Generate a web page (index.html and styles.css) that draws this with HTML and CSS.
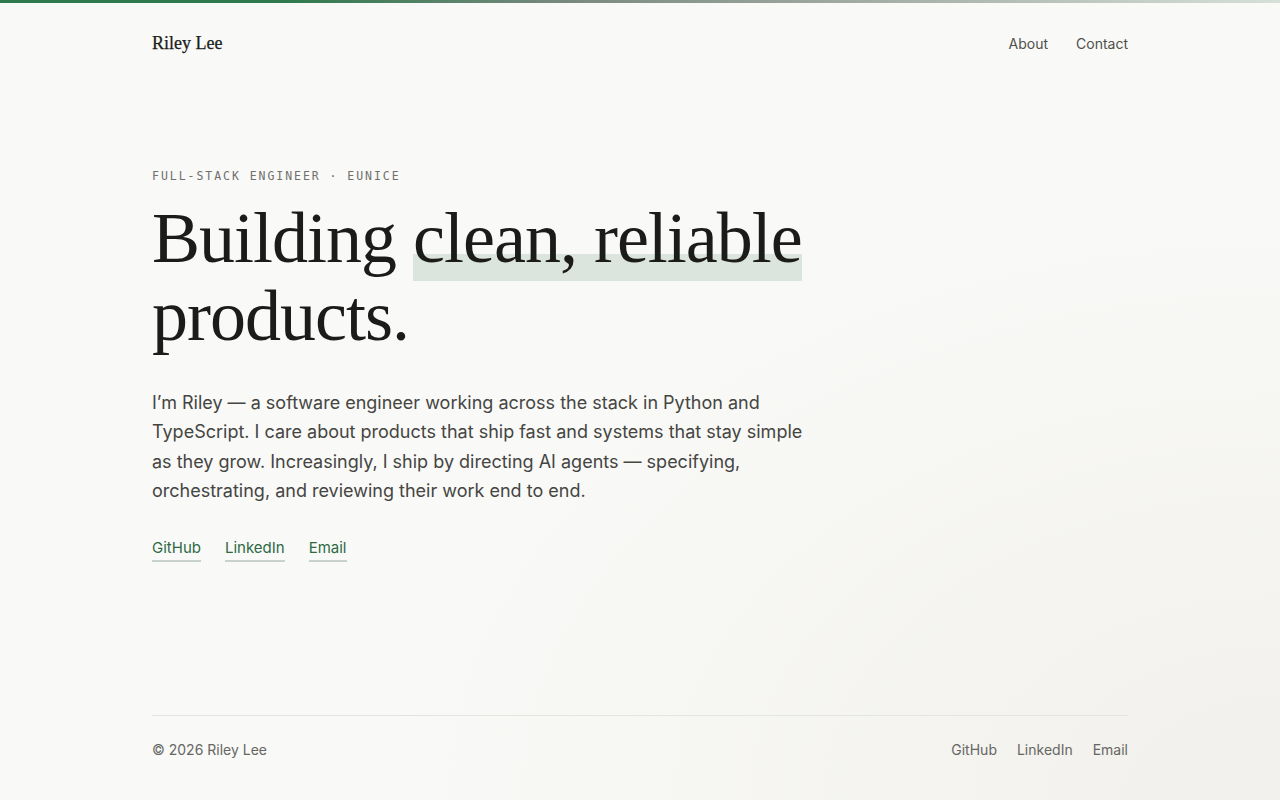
FILE: index.html
```html
<!DOCTYPE html>
<html lang="en">
<head>
<meta charset="utf-8">
<title>Riley Lee</title>
<link rel="stylesheet" href="styles.css">
</head>
<body>
<div class="topbar"></div>
<div class="page">
  <header class="header">
    <a class="brand" href="#">Riley Lee</a>
    <nav class="nav">
      <a href="#">About</a>
      <a href="#">Contact</a>
    </nav>
  </header>
  <main class="hero">
    <p class="eyebrow">Full-stack engineer · Eunice</p>
    <h1 class="title">Building <span class="mark">clean, reliable</span> products.</h1>
    <p class="lead">I’m Riley — a software engineer working across the stack in Python and TypeScript. I care about products that ship fast and systems that stay simple as they grow. Increasingly, I ship by directing AI agents — specifying, orchestrating, and reviewing their work end to end.</p>
    <div class="links">
      <a href="#">GitHub</a>
      <a href="#">LinkedIn</a>
      <a href="#">Email</a>
    </div>
  </main>
  <footer class="footer">
    <span class="copy">© 2026 Riley Lee</span>
    <div class="flinks">
      <a href="#">GitHub</a>
      <a href="#">LinkedIn</a>
      <a href="#">Email</a>
    </div>
  </footer>
</div>
</body>
</html>
```
FILE: styles.css
```css
* { box-sizing: border-box; }
html, body { margin: 0; padding: 0; }
body {
  min-height: 100vh;
  background: radial-gradient(ellipse 900px 600px at 100% 100%, #f1f0ec 0%, #f9f9f7 100%) #f9f9f7;
  font-family: "Inter", "Liberation Sans", sans-serif;
  color: #1c1c1a;
  display: flex;
  flex-direction: column;
}
a { text-decoration: none; color: inherit; }
.topbar {
  height: 3px;
  background: linear-gradient(90deg, #2e7a4c 0%, #2f7a4d 22%, #7b8a80 45%, #a6b0a8 70%, #d6e0d9 100%);
}
.page {
  flex: 1;
  width: 976px;
  margin: 0 auto;
  display: flex;
  flex-direction: column;
}
.header {
  display: flex;
  justify-content: space-between;
  align-items: center;
  height: 80px;
}
.brand {
  font-family: "Liberation Serif", "DejaVu Serif", serif;
  font-size: 18px;
  color: #1c1c1a;
  -webkit-text-stroke: 0.25px #1c1c1a;
}
.nav { display: flex; gap: 28px; font-size: 14px; color: #4f4f4c; }
.hero { padding-top: 86px; }
.eyebrow {
  margin: 0 0 16px;
  font-family: "DejaVu Sans Mono", "Liberation Mono", monospace;
  font-size: 11.5px;
  letter-spacing: 0.17em;
  text-transform: uppercase;
  color: #6f6f6c;
}
.title {
  margin: 0;
  max-width: 670px;
  font-family: "Liberation Serif", "DejaVu Serif", serif;
  font-weight: 400;
  font-size: 72px;
  line-height: 78px;
  letter-spacing: -1px;
  color: #1b1b19;
}
.mark {
  padding-bottom: 4px;
  background: linear-gradient(180deg, transparent 0, transparent 67%, #dbe5de 67%, #dbe5de 99%, transparent 99%);
}
.lead {
  margin: 33px 0 0;
  max-width: 660px;
  font-size: 18px;
  line-height: 29.3px;
  color: #454542;
}
.links { display: flex; gap: 24px; margin-top: 33px; font-size: 15px; }
.links a {
  color: #2d6a44;
  padding-bottom: 3px;
  border-bottom: 2px solid #c9d3cc;
}
.footer {
  margin-top: auto;
  border-top: 1px solid #e4e4e0;
  display: flex;
  justify-content: space-between;
  align-items: center;
  padding: 24px 0 40px;
  font-size: 14px;
  color: #666663;
  line-height: 20px;
}
.flinks { display: flex; gap: 20px; }
```
